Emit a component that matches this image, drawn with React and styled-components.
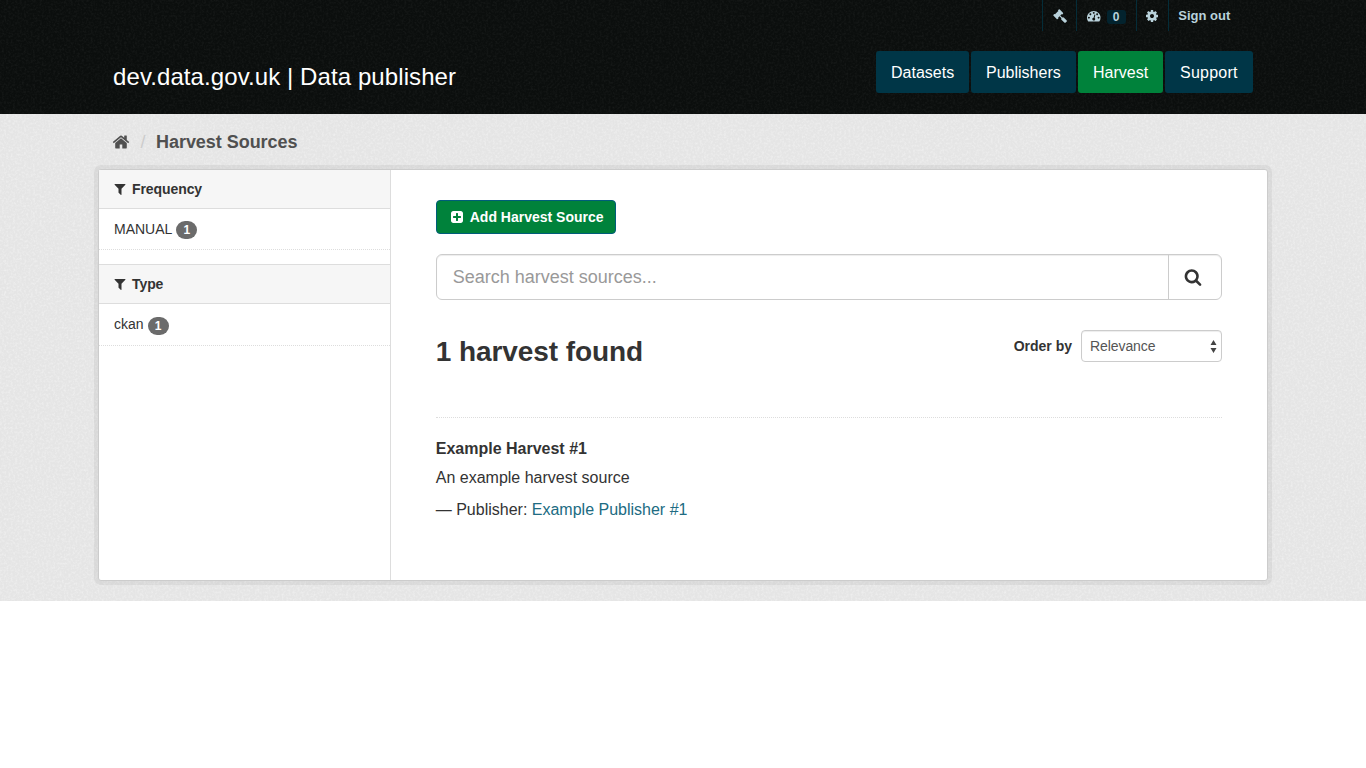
import React from "react";
import styled, { createGlobalStyle } from "styled-components";

const Global = createGlobalStyle`
  * { box-sizing: border-box; }
  body {
    margin: 0;
    background: #fff;
    color: #333;
    font: 14px/20px "Helvetica Neue", "Liberation Sans", Arial, sans-serif;
  }
  a { text-decoration: none; color: inherit; }
  h1, h2, h3, p, ul { margin: 0; padding: 0; font-weight: normal; }
`;

const Header = styled.header`
  position: relative;
  height: 114px;
  background: #0b0e0d;
  color: #fff;
`;
const Grain = styled.svg`
  position: absolute;
  inset: 0;
  width: 100%;
  height: 100%;
  pointer-events: none;
`;
const AccountBar = styled.nav`
  position: relative;
  display: flex;
  justify-content: flex-end;
  width: 1240px;
  height: 31px;
`;
const AccountItem = styled.a`
  display: flex;
  align-items: center;
  width: ${(p) => p.$w}px;
  padding-left: ${(p) => p.$pad || 10}px;
  border-left: 1px solid #042d39;
  color: #b9d2db;
  font-size: 13px;
  font-weight: bold;
`;
const Counter = styled.span`
  width: 19px;
  height: 14px;
  margin: 2px 0 0 6px;
  border-radius: 3px;
  background: #03232e;
  font-size: 12px;
  line-height: 14px;
  text-align: center;
`;
const Masthead = styled.div`
  position: relative;
  display: flex;
  justify-content: space-between;
  width: 1140px;
  margin: 20px auto 0;
`;
const SiteTitle = styled.a`
  padding-top: 11px;
  font-size: 24px;
  line-height: 30px;
  letter-spacing: 0.09px;
`;
const MainNav = styled.nav`
  display: flex;
  gap: 2px;
`;
const NavPill = styled.a`
  width: ${(p) => p.$w}px;
  height: 42px;
  padding-left: 15px;
  border-radius: 3px;
  background: ${(p) => (p.$active ? "#00823b" : "#003647")};
  font-size: 16px;
  line-height: 43px;
  letter-spacing: ${(p) => p.$ls || 0}px;
  white-space: nowrap;
`;

const Page = styled.main`
  position: relative;
  height: 487px;
  padding: 17px 98px 0;
  background: #e5e5e5;
`;
const Breadcrumb = styled.div`
  position: relative;
  display: flex;
  align-items: center;
  height: 22px;
  margin-bottom: 16px;
  padding-left: 14px;
  color: #505050;
  font-size: 18px;
  font-weight: bold;
  letter-spacing: -0.04px;
`;
const Slash = styled.span`
  width: 26px;
  color: #ccc;
  text-align: center;
  font-weight: normal;
`;
const Panel = styled.div`
  position: relative;
  display: flex;
  width: 1170px;
  height: 412px;
  border: 1px solid #ccc;
  border-radius: 3px;
  background: #fff;
  box-shadow: 0 0 0 4px rgba(0, 0, 0, 0.05);
`;
const Sidebar = styled.aside`
  width: 292px;
  border-right: 1px solid #ddd;
`;
const Facet = styled.section`
  margin-bottom: 14px;
`;
const FacetTitle = styled.h2`
  display: flex;
  align-items: center;
  gap: 5.5px;
  height: ${(p) => (p.$first ? 39 : 40)}px;
  padding: 0 13.5px;
  border-top: ${(p) => (p.$first ? "0" : "1px solid #ddd")};
  border-bottom: 1px solid #ddd;
  background: #f6f6f6;
  font-size: 14px;
  font-weight: bold;
  letter-spacing: -0.08px;
`;
const FacetRow = styled.a`
  display: flex;
  gap: 4px;
  height: ${(p) => p.$h}px;
  padding: 10px 15px 0;
  border-bottom: 1px dotted #ddd;
`;
const Badge = styled.span`
  width: 21px;
  height: 18px;
  margin-top: ${(p) => p.$top}px;
  border-radius: 9px;
  background: #6b6b6b;
  color: #fff;
  font-size: 12px;
  font-weight: bold;
  line-height: 18px;
  text-align: center;
`;
const Primary = styled.section`
  width: 877px;
  padding: 30px 45px 0;
`;
const AddButton = styled.a`
  display: flex;
  align-items: center;
  gap: 6px;
  width: 180px;
  height: 34px;
  padding-left: 13px;
  border: 1px solid #005d7a;
  border-radius: 4px;
  background: #00823b;
  color: #fff !important;
  font-size: 14px;
  font-weight: bold;
  white-space: nowrap;
`;
const SearchBox = styled.div`
  display: flex;
  height: 46px;
  margin-top: 20px;
  border: 1px solid #ccc;
  border-radius: 6px;
  box-shadow: inset 0 1px 1px rgba(0, 0, 0, 0.075);
`;
const SearchField = styled.div`
  flex: 1;
  padding-left: 16px;
  color: #999;
  font-size: 18px;
  line-height: 44px;
`;
const SearchButton = styled.div`
  display: flex;
  align-items: center;
  width: 53px;
  padding-left: 15px;
  border-left: 1px solid #ccc;
`;
const ResultsBar = styled.div`
  display: flex;
  justify-content: space-between;
  height: 88px;
  margin-top: 30px;
  border-bottom: 1px dotted #ddd;
`;
const ResultsTitle = styled.h1`
  padding-top: 5px;
  font-size: 28px;
  line-height: 33px;
  font-weight: bold;
  letter-spacing: -0.08px;
`;
const OrderBy = styled.div`
  display: flex;
  gap: 9px;
  height: 32px;
  line-height: 32px;
  font-weight: bold;
`;
const Select = styled.div`
  display: flex;
  align-items: center;
  justify-content: space-between;
  width: 141px;
  padding: 0 4px 0 8px;
  border: 1px solid #ccc;
  border-radius: 4px;
  box-shadow: inset 0 1px 1px rgba(0, 0, 0, 0.075);
  color: #555;
  font-weight: normal;
  letter-spacing: -0.08px;
`;
const Source = styled.article`
  padding-top: 20px;
  font-size: 16px;
`;
const SourceName = styled.h3`
  font-size: 16px;
  font-weight: bold;
  line-height: 21px;
`;
const Line = styled.p`
  margin-top: ${(p) => p.$top}px;
  line-height: 22px;
`;
const PublisherLink = styled.a`
  color: #206b82 !important;
`;
const Glyph = styled.svg`
  display: block;
  flex: none;
  width: ${(p) => p.$size}px;
  height: ${(p) => p.$size}px;
  fill: currentColor;
`;

const paths = {
  home: "M1472 992v480q0 26-19 45t-45 19h-384v-384h-256v384h-384q-26 0-45-19t-19-45v-480q0-1 .5-3t.5-3l575-474 575 474q1 2 1 6zm223-69l-62 74q-8 9-21 11h-3q-13 0-21-7l-692-577-692 577q-12 8-24 7-13-2-21-11l-62-74q-8-10-7-23.5t11-21.5l719-599q32-26 76-26t76 26l244 204v-195q0-14 9-23t23-9h192q14 0 23 9t9 23v408l219 182q10 8 11 21.5t-7 23.5z",
  filter: "M1595 295q17 41-14 70l-493 493v742q0 42-39 59-13 5-25 5-27 0-45-19l-256-256q-19-19-19-45v-486l-493-493q-31-29-14-70 17-39 59-39h1280q42 0 59 39z",
  search: "M1216 832q0-185-131.5-316.5t-316.5-131.5-316.5 131.5-131.5 316.5 131.5 316.5 316.5 131.5 316.5-131.5 131.5-316.5zm512 832q0 52-38 90t-90 38q-54 0-90-38l-343-342q-179 124-399 124-143 0-273.5-55.5t-225-150-150-225-55.5-273.5 55.5-273.5 150-225 225-150 273.5-55.5 273.5 55.5 225 150 150 225 55.5 273.5q0 220-124 399l343 343q37 37 37 90z",
  cog: "M1152 896q0-106-75-181t-181-75-181 75-75 181 75 181 181 75 181-75 75-181zm512-109v222q0 12-8 23t-20 13l-185 28q-19 54-39 91 35 50 107 138 10 12 10 25t-9 23q-27 37-99 108t-94 71q-12 0-26-9l-138-108q-44 23-91 38-16 136-29 186-7 28-36 28h-222q-14 0-24.5-8.5t-11.5-21.5l-28-184q-49-16-90-37l-141 107q-10 9-25 9-14 0-25-11-126-114-165-168-7-10-7-23 0-12 8-23 15-21 51-66.5t54-70.5q-27-50-41-99l-183-27q-13-2-21-12.5t-8-23.5v-222q0-12 8-23t19-13l186-28q14-46 39-92-40-57-107-138-10-12-10-24 0-10 9-23 26-36 98.5-107.5t94.5-71.5q13 0 26 10l138 107q44-23 91-38 16-136 29-186 7-28 36-28h222q14 0 24.5 8.5t11.5 21.5l28 184q49 16 90 37l142-107q9-9 24-9 13 0 25 10 129 119 165 170 7 8 7 22 0 12-8 23-15 21-51 66.5t-54 70.5q26 50 41 98l183 28q13 2 21 12.5t8 23.5z",
  plus: "M1408 960v-128q0-26-19-45t-45-19h-320v-320q0-26-19-45t-45-19h-128q-26 0-45 19t-19 45v320h-320q-26 0-45 19t-19 45v128q0 26 19 45t45 19h320v320q0 26 19 45t45 19h128q26 0 45-19t19-45v-320h320q26 0 45-19t19-45zm256-544v960q0 119-84.5 203.5t-203.5 84.5h-960q-119 0-203.5-84.5t-84.5-203.5v-960q0-119 84.5-203.5t203.5-84.5h960q119 0 203.5 84.5t84.5 203.5z",
  gavel: "M1771 1536q0 53-37 90l-107 108q-39 37-91 37-53 0-90-37l-363-364q-38-36-38-90 0-53 43-96l-256-256-126 126q-14 14-34 14t-34-14q2 2 12.5 12t12.5 13 10 11.5 10 13.5 6 13.5 5.5 16.5 1.5 18q0 38-28 68-3 3-16.5 18t-19 20.5-18.5 16.5-22 15.5-22 9-26 4.5q-40 0-68-28l-408-408q-28-28-28-68 0-13 4.5-26t9-22 15.5-22 16.5-18.5 20.5-19 18-16.5q30-28 68-28 10 0 18 1.5t16.5 5.5 13.5 6 13.5 10 11.5 10 13 12.5 12 12.5q-14-14-14-34t14-34l348-348q14-14 34-14t34 14q-2-2-12.5-12t-12.5-13-10-11.5-10-13.5-6-13.5-5.5-16.5-1.5-18q0-38 28-68 3-3 16.5-18t19-20.5 18.5-16.5 22-15.5 22-9 26-4.5q40 0 68 28l408 408q28 28 28 68 0 13-4.5 26t-9 22-15.5 22-16.5 18.5-20.5 19-18 16.5q-30 28-68 28-10 0-18-1.5t-16.5-5.5-13.5-6-13.5-10-11.5-10-13-12.5-12-12.5q14 14 14 34t-14 34l-126 126 256 256q43-43 96-43 52 0 91 37l363 363q37 39 37 91z",
  gauge: "M384 1152q0-53-37.5-90.5t-90.5-37.5-90.5 37.5-37.5 90.5 37.5 90.5 90.5 37.5 90.5-37.5 37.5-90.5zm192-448q0-53-37.5-90.5t-90.5-37.5-90.5 37.5-37.5 90.5 37.5 90.5 90.5 37.5 90.5-37.5 37.5-90.5zm428 481l101-382q6-26-7.5-48.5t-38.5-29.5-48 6.5-30 39.5l-101 382q-60 5-107 43.5t-63 98.5q-20 77 20 146t117 89 146-20 89-117q16-60-6-117t-72-91zm660-33q0-53-37.5-90.5t-90.5-37.5-90.5 37.5-37.5 90.5 37.5 90.5 90.5 37.5 90.5-37.5 37.5-90.5zm-640-640q0-53-37.5-90.5t-90.5-37.5-90.5 37.5-37.5 90.5 37.5 90.5 90.5 37.5 90.5-37.5 37.5-90.5zm448 192q0-53-37.5-90.5t-90.5-37.5-90.5 37.5-37.5 90.5 37.5 90.5 90.5 37.5 90.5-37.5 37.5-90.5zm320 448q0 261-141 483-19 29-54 29h-1402q-35 0-54-29-141-221-141-483 0-182 71-348t191-286 286-191 348-71 348 71 286 191 191 286 71 348z",
};

const Icon = ({ name, size = 14 }) => (
  <Glyph $size={size} viewBox="0 0 1792 1792" aria-hidden="true">
    <path d={paths[name]} />
  </Glyph>
);

const Texture = ({ id, strength }) => (
  <Grain aria-hidden="true">
    <filter id={id} x="0" y="0" width="100%" height="100%">
      <feTurbulence type="fractalNoise" baseFrequency="0.45" numOctaves="2" seed="4" />
      <feColorMatrix values={`0 0 0 0 1  0 0 0 0 1  0 0 0 0 1  ${strength} 0 0 0 ${-strength * 0.42}`} />
    </filter>
    <rect width="100%" height="100%" filter={`url(#${id})`} />
  </Grain>
);

export default function App() {
  return (
    <>
      <Global />
      <Header>
        <Texture id="grain-dark" strength={0.1} />
        <AccountBar>
          <AccountItem $w={34}><Icon name="gavel" /></AccountItem>
          <AccountItem $w={60}><Icon name="gauge" size={13.5} /><Counter>0</Counter></AccountItem>
          <AccountItem $w={32} $pad={8}><Icon name="cog" /></AccountItem>
          <AccountItem $w={72} $pad={9.3}>Sign out</AccountItem>
        </AccountBar>
        <Masthead>
          <SiteTitle>dev.data.gov.uk | Data publisher</SiteTitle>
          <MainNav>
            <NavPill $w={93}>Datasets</NavPill>
            <NavPill $w={105}>Publishers</NavPill>
            <NavPill $w={85} $active>Harvest</NavPill>
            <NavPill $w={88} $ls={0.25}>Support</NavPill>
          </MainNav>
        </Masthead>
      </Header>
      <Page>
        <Texture id="grain-light" strength={0.8} />
        <Breadcrumb>
          <Icon name="home" size={18} />
          <Slash>/</Slash>
          <span>Harvest Sources</span>
        </Breadcrumb>
        <Panel>
          <Sidebar>
            <Facet>
              <FacetTitle $first><Icon name="filter" /><span>Frequency</span></FacetTitle>
              <FacetRow $h={41}>MANUAL<Badge $top={2}>1</Badge></FacetRow>
            </Facet>
            <Facet>
              <FacetTitle><Icon name="filter" /><span>Type</span></FacetTitle>
              <FacetRow $h={42}>ckan<Badge $top={3}>1</Badge></FacetRow>
            </Facet>
          </Sidebar>
          <Primary>
            <AddButton><Icon name="plus" /><span>Add Harvest Source</span></AddButton>
            <SearchBox>
              <SearchField>Search harvest sources...</SearchField>
              <SearchButton><Icon name="search" size={18} /></SearchButton>
            </SearchBox>
            <ResultsBar>
              <ResultsTitle>1 harvest found</ResultsTitle>
              <OrderBy>
                <span>Order by</span>
                <Select>
                  Relevance
                  <svg width="7" height="13" viewBox="0 0 7 13" fill="#444" aria-hidden="true">
                    <path d="M3.5 0L6.5 5H.5zM3.5 13L6.5 8H.5z" />
                  </svg>
                </Select>
              </OrderBy>
            </ResultsBar>
            <Source>
              <SourceName>Example Harvest #1</SourceName>
              <Line $top={8}>An example harvest source</Line>
              <Line $top={10}>— Publisher: <PublisherLink>Example Publisher #1</PublisherLink></Line>
            </Source>
          </Primary>
        </Panel>
      </Page>
    </>
  );
}
